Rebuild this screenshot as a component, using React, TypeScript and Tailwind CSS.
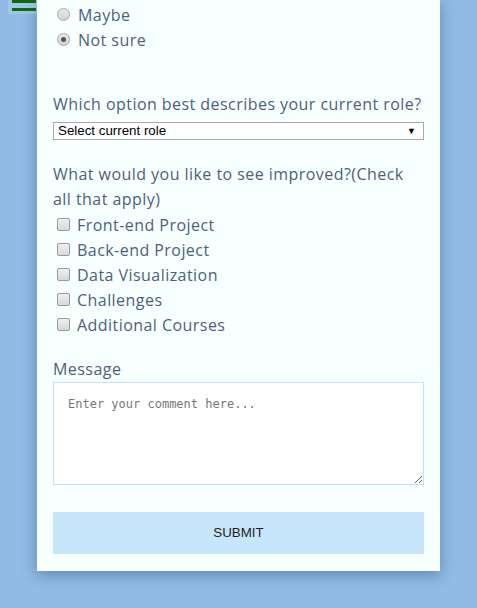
import React from "react";

const Radio = ({ checked }: { checked?: boolean }) => (
  <span className="relative inline-flex h-[13px] w-[13px] shrink-0 items-center justify-center rounded-full border border-[#a6a6a6] bg-gradient-to-b from-[#e8e8e8] to-[#d4d4d4]">
    {checked && <span className="h-[5px] w-[5px] rounded-full bg-[#555]" />}
  </span>
);

const Check = () => (
  <span className="inline-block h-[13px] w-[13px] shrink-0 rounded-[2px] border border-[#9a9a9a] bg-gradient-to-b from-[#f0f0f0] to-[#d8d8d8]" />
);

export default function App() {
  const items = ["Front-end Project", "Back-end Project", "Data Visualization", "Challenges", "Additional Courses"];
  return (
    <div className="relative min-h-[608px] w-full bg-[#91bbe4] pb-[38px]" style={{ fontFamily: "'Open Sans', 'Liberation Sans', sans-serif" }}>
      <div className="absolute left-[8px] top-0 z-10 flex h-[14px] w-[29px] flex-col gap-[5px] bg-white/15 pl-[4px] pt-0">
        <span className="h-[3px] w-[24px] bg-[#0b6a0b]" />
        <span className="h-[3px] w-[24px] bg-[#0b6a0b]" />
      </div>
      <div className="mx-auto w-[403px] bg-[#f8ffff] px-[16px] pb-[17px] pt-[2px] text-[16px] tracking-[0.45px] text-[#4d5f7d] shadow-[0_4px_14px_rgba(40,70,110,0.45)]">
        <div className="flex flex-col">
          <label className="flex h-[25px] items-center gap-[8px] pl-[4px]">
            <Radio />
            <span>Maybe</span>
          </label>
          <label className="flex h-[25px] items-center gap-[8px] pl-[4px]">
            <Radio checked />
            <span>Not sure</span>
          </label>
        </div>
        <div className="mt-[40px] leading-[25px]">Which option best describes your current role?</div>
        <div className="relative mt-[5px] h-[18px] w-full border border-[#a9a9a9] bg-white tracking-normal">
          <div className="pl-[4px] text-[13.33px] leading-[16px] text-black" style={{ fontFamily: "'Liberation Sans', Arial, sans-serif" }}>
            Select current role
          </div>
          <span className="pointer-events-none absolute right-[7px] top-[1px] text-[9px] leading-[14px] text-black">▼</span>
        </div>
        <div className="mt-[22px] leading-[25px]">What would you like to see improved?(Check all that apply)</div>
        <div className="flex flex-col">
          {items.map((t) => (
            <label key={t} className="flex h-[25px] items-center gap-[7px] pl-[4px]">
              <Check />
              <span>{t}</span>
            </label>
          ))}
        </div>
        <div className="mt-[20px] leading-[25px]">Message</div>
        <textarea
          className="block h-[103px] w-full resize-y border border-[#bfe2f8] bg-white px-[14px] pb-[13px] pt-[12px] text-[12px] tracking-normal text-[#333] placeholder:text-[#777] outline-none"
          style={{ fontFamily: "'DejaVu Sans Mono', 'Liberation Mono', monospace" }}
          placeholder="Enter your comment here..."
        />
        <button
          className="mt-[27px] block h-[42px] w-full bg-[#c7e5fb] text-[13.33px] tracking-normal text-[#1f1f1f]"
          style={{ fontFamily: "'Liberation Sans', Arial, sans-serif" }}
        >
          SUBMIT
        </button>
      </div>
    </div>
  );
}
